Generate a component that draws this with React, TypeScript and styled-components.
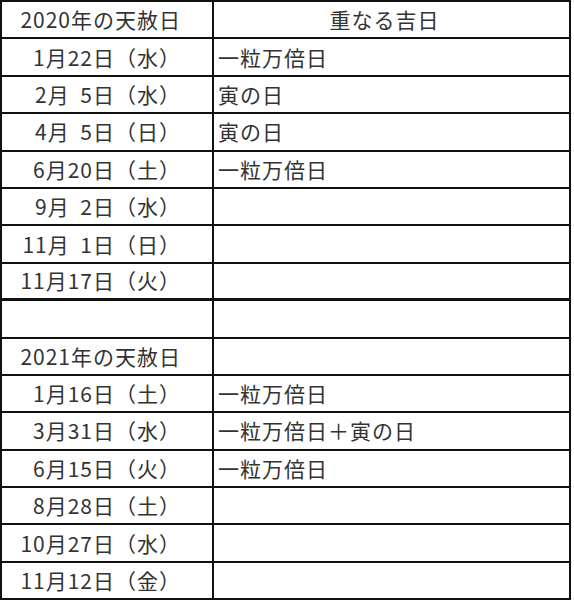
import styled, { createGlobalStyle } from "styled-components";

//Data
type Entry = { m: number; d: number; w: string; lucky?: string };

const year2020: Entry[] = [
	{ m: 1, d: 22, w: "水", lucky: "一粒万倍日" },
	{ m: 2, d: 5, w: "水", lucky: "寅の日" },
	{ m: 4, d: 5, w: "日", lucky: "寅の日" },
	{ m: 6, d: 20, w: "土", lucky: "一粒万倍日" },
	{ m: 9, d: 2, w: "水" },
	{ m: 11, d: 1, w: "日" },
	{ m: 11, d: 17, w: "火" },
];

const year2021: Entry[] = [
	{ m: 1, d: 16, w: "土", lucky: "一粒万倍日" },
	{ m: 3, d: 31, w: "水", lucky: "一粒万倍日＋寅の日" },
	{ m: 6, d: 15, w: "火", lucky: "一粒万倍日" },
	{ m: 8, d: 28, w: "土" },
	{ m: 10, d: 27, w: "水" },
	{ m: 11, d: 12, w: "金" },
];

const GlobalStyle = createGlobalStyle`
	html, body {
		margin: 0;
		background: #fff;
	}
	body {
		font-family: "Noto Sans CJK JP", "Noto Sans", sans-serif;
		color: #333;
	}
`;

const App = () => {
	const renderRows = (list: Entry[], thickLast = false) =>
		list.map((e, i) => {
			const thick = thickLast && i === list.length - 1;
			return (
				<Row key={`${e.m}-${e.d}`}>
					<DateCell $thick={thick}>
						{e.m}月<Day>{e.d}</Day>日（{e.w}）
					</DateCell>
					<NoteCell $thick={thick}>{e.lucky}</NoteCell>
				</Row>
			);
		});

	return (
		<>
			<GlobalStyle />
			<Sheet>
				<Row>
					<DateCell>2020年の天赦日</DateCell>
					<HeadCell>重なる吉日</HeadCell>
				</Row>
				{renderRows(year2020, true)}
				<Row>
					<DateCell />
					<NoteCell />
				</Row>
				<Row>
					<DateCell>2021年の天赦日</DateCell>
					<NoteCell />
				</Row>
				{renderRows(year2021)}
			</Sheet>
		</>
	);
};

export default App;

const Sheet = styled.div`
	display: grid;
	grid-template-columns: 212px 357px;
	grid-auto-rows: 37.4px;
	width: max-content;
	border-top: 2px solid #111;
	border-left: 2px solid #111;
`;

const Row = styled.div`
	display: contents;
`;

const Cell = styled.div<{ $thick?: boolean }>`
	box-sizing: border-box;
	display: flex;
	align-items: center;
	font-size: 21px;
	letter-spacing: 1px;
	line-height: 1;
	white-space: pre;
	border-right: 2px solid #111;
	border-bottom: ${(p) => (p.$thick ? "3px" : "2px")} solid #111;
`;

const DateCell = styled(Cell)`
	justify-content: flex-end;
	padding-right: 31px;
`;

const NoteCell = styled(Cell)`
	padding-left: 4px;
`;

const HeadCell = styled(Cell)`
	justify-content: center;
	padding-right: 14px;
`;

const Day = styled.span`
	display: inline-block;
	min-width: 2ch;
	text-align: right;
	font-variant-numeric: tabular-nums;
`;
